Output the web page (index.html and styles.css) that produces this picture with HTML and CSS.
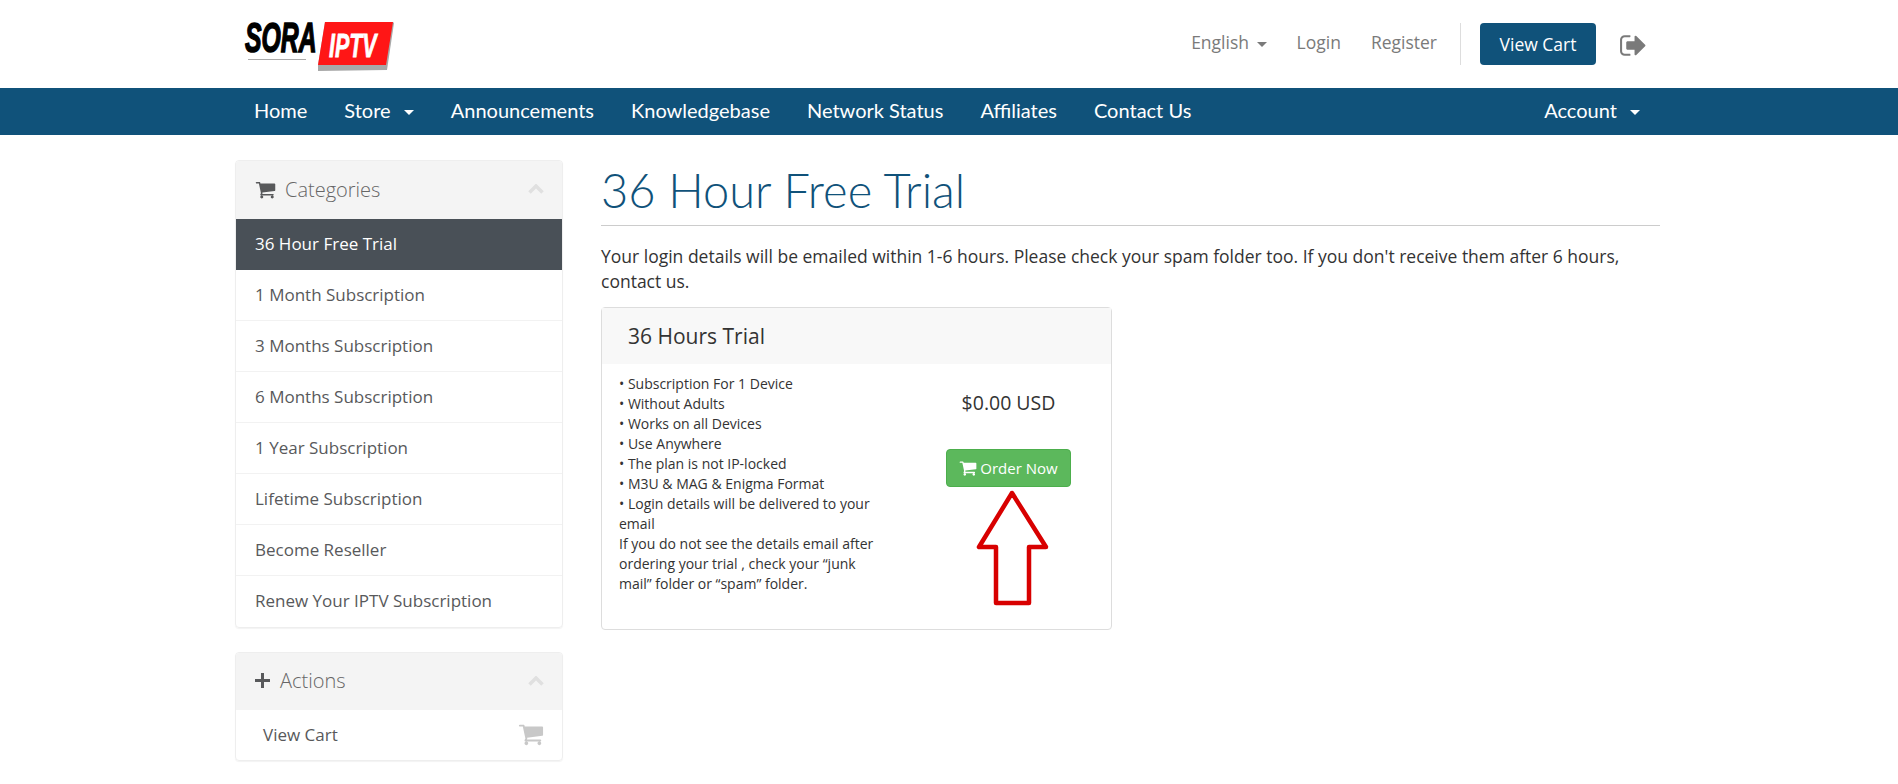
FILE: index.html
```html
<!DOCTYPE html>
<html lang="en">
<head>
  <meta charset="UTF-8">
  <title>36 Hour Free Trial</title>
  <link rel="stylesheet" href="styles.css">
</head>
<body>
  <svg class="defs" width="0" height="0">
    <symbol id="i-cart" viewBox="0 0 1792 1792"><path d="M704 1536q0 52-38 90t-90 38-90-38-38-90 38-90 90-38 90 38 38 90zm896 0q0 52-38 90t-90 38-90-38-38-90 38-90 90-38 90 38 38 90zm128-1088v512q0 24-16.500 42.500t-40.500 21.500l-1044 122q13 60 13 70 0 16-24 64h920q26 0 45 19t19 45-19 45-45 19h-1024q-26 0-45-19t-19-45q0-11 8-31.500t16-36 21.500-40 15.500-29.500l-177-823h-204q-26 0-45-19t-19-45 19-45 45-19h256q16 0 28.500 6.500t19.500 15.500 13 24.500 8 26 5.500 29.500 4.500 26h1201q26 0 45 19t19 45z"/></symbol>
    <symbol id="i-out" viewBox="0 0 1792 1792"><path d="M704 1440q0 4 1 20t.5 26.500-3 23.500-10 19.500-20.500 6.500h-320q-119 0-203.500-84.500t-84.500-203.500v-704q0-119 84.500-203.500t203.500-84.500h320q13 0 22.500 9.500t9.500 22.500q0 4 1 20t.5 26.500-3 23.500-10 19.500-20.500 6.500h-320q-66 0-113 47t-47 113v704q0 66 47 113t113 47h312l11.500 1 11.500 3 8 5.500 7 9 2 13.500zm928-544q0 26-19 45l-544 544q-19 19-45 19t-45-19-19-45v-288h-448q-26 0-45-19t-19-45v-384q0-26 19-45t45-19h448v-288q0-26 19-45t45-19 45 19l544 544q19 19 19 45z"/></symbol>
    <symbol id="i-chev" viewBox="0 0 16 10"><path d="M1.500 8.500 8 2l6.500 6.500" fill="none" stroke="currentColor" stroke-width="3.500"/></symbol>
  </svg>

  <header class="topbar">
    <div class="wrap topbar-inner">
      <a class="logo" href="#">
        <svg width="165" height="72" viewBox="0 -8 165 72">
          <polygon points="90,6 158,6 159,7 152,54 83,55 83,49" fill="#a8a8a8"/>
          <polygon points="90,6 158,6 151,49 83,49" fill="#ff1616"/>
          <text class="logo-sora" transform="translate(10 36) scale(.59 1)">SORA</text>
          <text class="logo-iptv" transform="translate(94 41) scale(.63 1)">IPTV</text>
          <rect x="13" y="43" width="58" height="1" fill="#aaa"/>
        </svg>
      </a>
      <nav class="toplinks">
        <a href="#">English <span class="caret"></span></a>
        <a href="#">Login</a>
        <a class="last" href="#">Register</a>
        <span class="divider"></span>
        <a class="btn-cart" href="#">View Cart</a>
        <a class="logout" href="#"><svg width="29" height="29"><use href="#i-out"/></svg></a>
      </nav>
    </div>
  </header>

  <div class="mainnav">
    <div class="wrap mainnav-inner">
      <a href="#">Home</a>
      <a href="#">Store <span class="caret"></span></a>
      <a href="#">Announcements</a>
      <a href="#">Knowledgebase</a>
      <a href="#">Network Status</a>
      <a href="#">Affiliates</a>
      <a href="#">Contact Us</a>
      <a class="account" href="#">Account <span class="caret"></span></a>
    </div>
  </div>

  <div class="wrap content">
    <aside class="sidebar">
      <div class="panel">
        <div class="panel-head">
          <svg class="head-icon" width="21" height="21"><use href="#i-cart"/></svg>
          <span class="panel-title">Categories</span>
          <svg class="chev" width="16" height="10"><use href="#i-chev"/></svg>
        </div>
        <a class="item active" href="#">36 Hour Free Trial</a>
        <a class="item" href="#">1 Month Subscription</a>
        <a class="item" href="#">3 Months Subscription</a>
        <a class="item" href="#">6 Months Subscription</a>
        <a class="item" href="#">1 Year Subscription</a>
        <a class="item" href="#">Lifetime Subscription</a>
        <a class="item" href="#">Become Reseller</a>
        <a class="item" href="#">Renew Your IPTV Subscription</a>
      </div>
      <div class="panel">
        <div class="panel-head short">
          <span class="plus"></span>
          <span class="panel-title">Actions</span>
          <svg class="chev" width="16" height="10"><use href="#i-chev"/></svg>
        </div>
        <a class="item action" href="#"><span class="action-label">View Cart</span>
          <svg width="26" height="26"><use href="#i-cart"/></svg>
        </a>
      </div>
    </aside>

    <main class="main">
      <h1>36 Hour Free Trial</h1>
      <p class="intro">Your login details will be emailed within 1-6 hours. Please check your spam folder too. If you don't receive them after 6 hours, contact us.</p>

      <div class="product">
        <div class="product-head">36 Hours Trial</div>
        <div class="product-body">
          <div class="features">
            • Subscription For 1 Device<br>
            • Without Adults<br>
            • Works on all Devices<br>
            • Use Anywhere<br>
            • The plan is not IP-locked<br>
            • M3U &amp; MAG &amp; Enigma Format<br>
            • Login details will be delivered to your email<br>
            If you do not see the details email after ordering your trial , check your “junk mail” folder or “spam” folder.
          </div>
          <div class="pricing">
            <div class="price">$0.00 USD</div>
            <a class="btn-order" href="#"><svg width="18" height="18"><use href="#i-cart"/></svg> Order Now</a>
            <svg class="arrow" width="76" height="120" viewBox="0 0 76 120">
              <path d="M36 5 3 59H20V115H53V59H70Z" fill="none" stroke="#d80000" stroke-width="4.500" stroke-linejoin="round"/>
            </svg>
          </div>
        </div>
      </div>
    </main>
  </div>
</body>
</html>
```

FILE: styles.css
```css
* {
  box-sizing: border-box;
}

body {
  margin: 0;
  font-family: "Open Sans", sans-serif;
  font-size: 17px;
  color: #333;
  background: #fff;
}

a {
  text-decoration: none;
  color: inherit;
}

.defs {
  position: absolute;
}

.wrap {
  width: 1425px;
  margin-left: 235px;
}

.caret {
  display: inline-block;
  width: 0;
  height: 0;
  margin-left: 3px;
  vertical-align: middle;
  border-top: 5px solid currentColor;
  border-left: 5px solid transparent;
  border-right: 5px solid transparent;
}

/* top bar */
.topbar {
  height: 88px;
}

.topbar-inner {
  display: flex;
  align-items: center;
  justify-content: space-between;
  height: 88px;
}

.logo {
  display: block;
  height: 72px;
}

.logo-sora {
  font-family: "Liberation Sans", sans-serif;
  font-weight: 700;
  font-style: italic;
  font-size: 42px;
  fill: #000;
  stroke: #000;
  stroke-width: 1.500;
}

.logo-iptv {
  font-family: "Liberation Sans", sans-serif;
  font-weight: 700;
  font-style: italic;
  font-size: 34px;
  fill: #fff;
  stroke: #fff;
  stroke-width: .8;
}

.toplinks {
  display: flex;
  align-items: center;
  font-size: 17.500px;
  color: #7a7a7a;
}

.toplinks > a {
  margin-right: 30px;
  margin-top: -4px;
}

.toplinks > a.last {
  margin-right: 23px;
}

.divider {
  width: 1px;
  height: 42px;
  margin-right: 19px;
  background: #ddd;
}

.toplinks > a.btn-cart {
  display: flex;
  align-items: center;
  justify-content: center;
  width: 116px;
  height: 42px;
  margin: 0 23px 0 0;
  border-radius: 4px;
  background: #10527a;
  color: #fff;
}

.toplinks > a.logout {
  display: flex;
  margin: 2px 12px 0 0;
  fill: #7a7a7a;
}

/* main nav */
.mainnav {
  height: 47px;
  background: #10527a;
}

.mainnav-inner {
  display: flex;
  align-items: center;
  gap: 37px;
  height: 47px;
  padding: 0 20px 3px 19px;
  font-family: Lato, sans-serif;
  font-size: 20px;
  color: #fff;
}

.mainnav .caret {
  margin-left: 8px;
}

.account {
  margin-left: auto;
}

/* page columns */
.content {
  display: grid;
  grid-template-columns: 328px 1fr;
  gap: 38px;
  padding-top: 25px;
}

.panel {
  margin-bottom: 24px;
  overflow: hidden;
  border: 1px solid #eee;
  border-radius: 4px;
  box-shadow: 0 1px 1px rgba(0, 0, 0, .05);
}

.panel-head {
  display: flex;
  align-items: center;
  height: 58px;
  padding: 0 18px 2px 19px;
  background: #f4f4f4;
  fill: #58595b;
}

.panel-head.short {
  height: 57px;
}

.panel-title {
  margin-left: 9px;
  font-size: 20px;
  font-weight: 300;
  color: #666;
}

.plus {
  width: 15px;
  height: 15px;
  background:
    linear-gradient(#58595b, #58595b) center / 15px 3px no-repeat,
    linear-gradient(#58595b, #58595b) center / 3px 15px no-repeat;
}

.short .panel-title {
  margin-left: 10px;
}

.chev {
  margin-left: auto;
  color: #e0e0e0;
}

.item {
  display: flex;
  align-items: center;
  height: 51px;
  padding: 0 18px 2px 19px;
  border-bottom: 1px solid #f2f2f2;
  color: #58595b;
}

.item:last-child {
  border-bottom: 0;
}

.item.active {
  background: #495057;
  border-bottom: 0;
  color: #fff;
}

.item.action {
  justify-content: space-between;
  height: 50px;
  padding: 0 18px 3px 27px;
  fill: #c8c8c8;
}

.action-label {
  margin-top: 2px;
}

/* main column */
h1 {
  margin: 0;
  padding: 7px 0 11px;
  border-bottom: 1px solid #ccc;
  font-family: Lato, sans-serif;
  font-size: 47px;
  font-weight: 300;
  line-height: 47px;
  color: #10527a;
}

.intro {
  margin: 18px 0 13px;
  font-size: 17.500px;
  line-height: 25px;
}

.product {
  width: 511px;
  height: 323px;
  border: 1px solid #ddd;
  border-radius: 4px;
}

.product-head {
  height: 56px;
  padding: 0 26px;
  background: #f8f8f8;
  font-size: 21px;
  line-height: 57px;
}

.product-body {
  display: flex;
  padding: 10px 0 10px 17px;
}

.features {
  width: 262px;
  font-size: 14px;
  line-height: 20px;
}

.pricing {
  display: flex;
  flex-direction: column;
  align-items: center;
  width: 199px;
  margin-left: 28px;
  padding-top: 17px;
}

.price {
  font-size: 19.500px;
  line-height: 24px;
}

.btn-order {
  display: flex;
  align-items: center;
  justify-content: center;
  gap: 3px;
  width: 125px;
  height: 38px;
  margin-top: 34px;
  border: 1px solid #4cae4c;
  border-radius: 4px;
  background: #5cb85c;
  color: #fff;
  fill: #fff;
  font-size: 15px;
}

.arrow {
  display: block;
  margin: 1px 0 0 11px;
}
```
